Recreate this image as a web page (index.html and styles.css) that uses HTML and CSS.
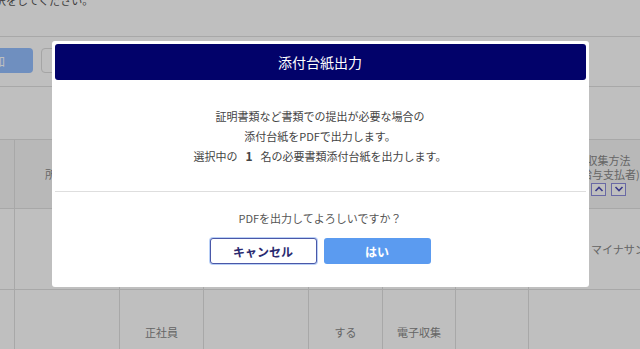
FILE: index.html
```html
<!DOCTYPE html>
<html lang="ja">
<head>
<meta charset="UTF-8">
<meta name="viewport" content="width=device-width, initial-scale=1.0">
<title>添付台紙出力</title>
<link rel="stylesheet" href="styles.css">
</head>
<body>
<div class="page">
    <div class="notice">出力する従業員の選択をしてください。</div>
    <div class="toolbar">
        <button class="tool-button outline">戻る</button>
        <button class="tool-button primary">追加</button>
        <button class="tool-button outline wide">一括選択</button>
    </div>
    <table class="list">
        <colgroup>
            <col style="width: 40px">
            <col style="width: 94px">
            <col style="width: 105px">
            <col style="width: 84px">
            <col style="width: 105px">
            <col style="width: 74px">
            <col style="width: 73px">
            <col style="width: 73px">
            <col style="width: 160px">
        </colgroup>
        <tr class="head-row">
            <th></th>
            <th>氏名</th>
            <th>所属部署</th>
            <th>雇用区分</th>
            <th>入社日</th>
            <th>提出</th>
            <th>収集</th>
            <th>状況</th>
            <th>
                <div>収集方法</div>
                <div>(給与支払者)</div>
                <div class="sorters">
                    <span class="sort-btn"><svg width="10" height="8" viewBox="0 0 10 8"><polyline points="1.5,6 5,2.5 8.5,6" fill="none" stroke="#4e4eb8" stroke-width="1.6"/></svg></span>
                    <span class="sort-btn"><svg width="10" height="8" viewBox="0 0 10 8"><polyline points="1.5,2 5,5.5 8.5,2" fill="none" stroke="#4e4eb8" stroke-width="1.6"/></svg></span>
                </div>
            </th>
        </tr>
        <tr class="row-first">
            <td></td>
            <td></td>
            <td></td>
            <td></td>
            <td></td>
            <td></td>
            <td></td>
            <td></td>
            <td class="left">マイナサンプル</td>
        </tr>
        <tr class="row-second">
            <td></td>
            <td></td>
            <td></td>
            <td>正社員</td>
            <td></td>
            <td>する</td>
            <td>電子収集</td>
            <td></td>
            <td></td>
        </tr>
    </table>
</div>

<div class="overlay">
    <div class="modal">
        <div class="modal-title">添付台紙出力</div>
        <div class="modal-body">
            <p>証明書類など書類での提出が必要な場合の<br>添付台紙をPDFで出力します。<br>選択中の<span class="count">1</span>名の必要書類添付台紙を出力します。</p>
        </div>
        <div class="modal-footer">
            <p>PDFを出力してよろしいですか？</p>
            <div class="modal-actions">
                <button class="btn-cancel">キャンセル</button>
                <button class="btn-ok">はい</button>
            </div>
        </div>
    </div>
</div>
</body>
</html>
```

FILE: styles.css
```css
body {
    margin: 0;
    width: 640px;
    height: 349px;
    overflow: hidden;
    background-color: #fff;
    font-family: "Noto Sans CJK JP", sans-serif;
    color: #555;
}
.page {
    margin-left: -120px;
}
.notice {
    margin-top: -10px;
    padding: 0 0 26px 16px;
    line-height: 20px;
    font-size: 11px;
    color: #555;
    border-bottom: 1px solid #e0e0e0;
}
.toolbar {
    display: flex;
    gap: 8px;
    padding: 11px 0 13px 16px;
    border-bottom: 1px solid #e0e0e0;
}
.tool-button {
    width: 49px;
    height: 25px;
    border-radius: 4px;
    font-family: inherit;
    font-size: 12px;
    padding: 0;
}
.tool-button.primary {
    width: 80px;
    background-color: #94bfff;
    border: none;
    color: #fff;
}
.tool-button.outline {
    background-color: #fff;
    border: 1px solid #dcdcdc;
    color: #666;
}
.tool-button.wide {
    width: 90px;
}
.list {
    margin-top: 52px;
    border-collapse: collapse;
    table-layout: fixed;
    width: 808px;
    font-size: 11px;
    color: #888;
}
.list th,
.list td {
    border: 1px solid #e0e0e0;
    text-align: center;
    vertical-align: middle;
    padding: 0;
    font-weight: normal;
}
.head-row th {
    background-color: #f6f6f6;
    height: 68px;
    line-height: 14px;
}
.row-first td {
    height: 80px;
}
.row-second td {
    height: 84px;
}
.list td.left {
    text-align: left;
    padding-left: 62px;
}
.sorters {
    display: flex;
    justify-content: center;
    gap: 5px;
    margin-top: 2px;
}
.sort-btn {
    display: flex;
    align-items: center;
    justify-content: center;
    width: 13px;
    height: 11px;
    border: 1px solid #8d8ddd;
    background-color: #fff;
}
.overlay {
    position: fixed;
    top: 0;
    left: 0;
    right: 0;
    bottom: 0;
    background-color: rgba(0, 0, 0, 0.25);
    display: flex;
    justify-content: center;
    align-items: flex-start;
    padding-top: 41px;
}
.modal {
    width: 537px;
    box-sizing: border-box;
    background-color: #fff;
    border-radius: 3px;
    padding: 3px 3px 0;
}
.modal-title {
    height: 36px;
    line-height: 36px;
    background-color: #02026a;
    color: #fff;
    border-radius: 3px;
    text-align: center;
    font-size: 14px;
}
.modal-body {
    padding: 26px 0 25px;
}
.modal-body p,
.modal-footer p {
    margin: 0;
    text-align: center;
    font-size: 11px;
    line-height: 20px;
    color: #444;
}
.count {
    font-weight: bold;
    font-size: 12px;
    margin: 0 8px;
}
.modal-footer {
    border-top: 1px solid #dedede;
    padding: 16px 0 23px;
}
.modal-footer p {
    color: #555;
}
.modal-actions {
    display: flex;
    justify-content: center;
    gap: 7px;
    margin-top: 10px;
}
.btn-cancel,
.btn-ok {
    width: 107px;
    height: 26px;
    border-radius: 3px;
    font-family: inherit;
    font-size: 12px;
    font-weight: bold;
    cursor: pointer;
    padding: 0;
}
.btn-cancel {
    background-color: #fff;
    border: 1px solid #4a58a8;
    box-shadow: 0 0 0 1px #b9d0f7;
    color: #2a2a70;
}
.btn-ok {
    background-color: #5b9bf0;
    border: none;
    color: #fff;
}
```
